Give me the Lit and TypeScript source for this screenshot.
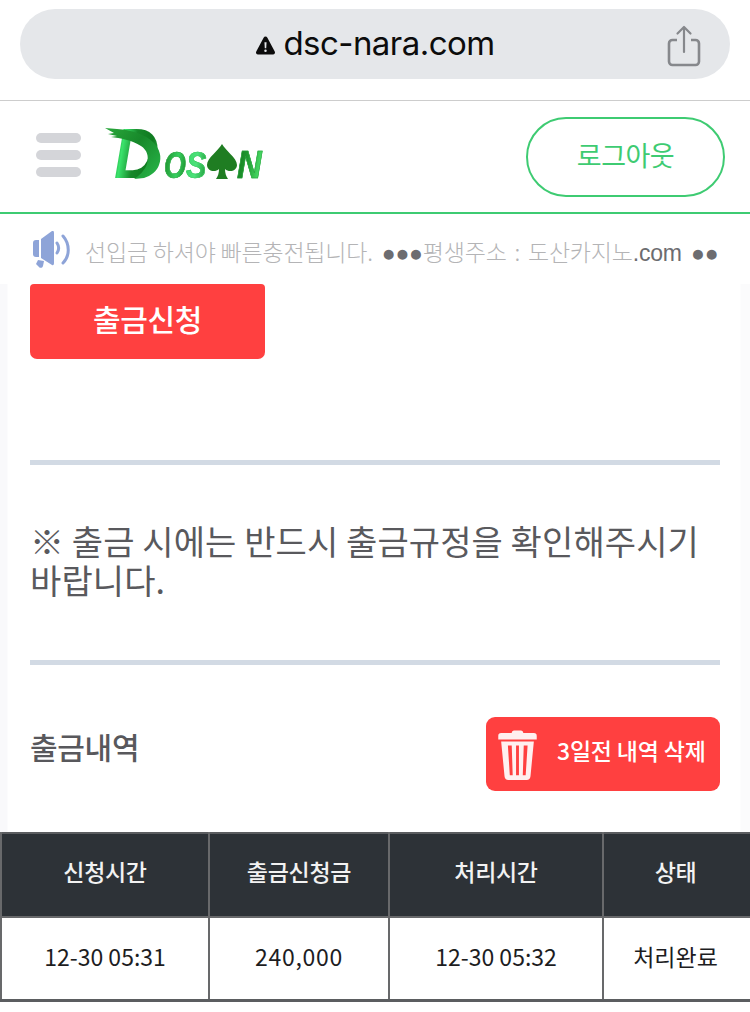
import { LitElement, html, css } from 'lit';
import { customElement } from 'lit/decorators.js';

@customElement('app-root')
export class AppRoot extends LitElement {
  static styles = css`
    :host {
      display: block;
      width: 750px;
      height: 1012px;
      overflow: hidden;
      background: #fff;
      font-family: "Noto Sans CJK KR", sans-serif;
    }

    /* safari address bar */
    .browser {
      height: 101px;
      box-sizing: border-box;
      padding: 9px 20px 0;
      border-bottom: 1px solid #cdcdcd;
    }
    .url {
      height: 70px;
      border-radius: 35px;
      background: #e5e7ea;
      display: flex;
      align-items: center;
      justify-content: center;
      position: relative;
      gap: 7px;
      font-family: Inter, "Liberation Sans", sans-serif;
      font-size: 33px;
      letter-spacing: -0.55px;
      color: #0c0c0c;
      padding-bottom: 3px;
      box-sizing: border-box;
    }
    .warn { width: 21px; height: 21px; margin-top: 5px; }
    .share { position: absolute; right: 29px; top: 16px; width: 34px; height: 42px; }

    /* site header */
    .header {
      height: 113px;
      box-sizing: border-box;
      border-bottom: 2px solid #3ecb72;
      display: flex;
      align-items: center;
      padding: 0 25px 0 36px;
    }
    .burger { display: flex; flex-direction: column; gap: 7px; width: 45px; margin-top: -3px; }
    .burger span { height: 10px; border-radius: 5px; background: #d4d5d9; }
    .logo {
      position: relative;
      margin-left: 23px;
      margin-top: -7px;
      width: 160px;
      height: 51px;
      display: flex;
      align-items: flex-end;
      font-family: "Liberation Sans", sans-serif;
      font-weight: 700;
      font-style: italic;
    }
    .logo .stroke { position: absolute; left: 0; top: 0; width: 60px; height: 51px; }
    .logo .l {
      display: block;
      flex: none;
      color: transparent;
      -webkit-background-clip: text;
      background-clip: text;
      line-height: 0.693;
      padding-top: 5px;
      transform-origin: left bottom;
    }
    .logo .d {
      font-size: 70px;
      width: 56px;
      margin: 0 -6px 0 10px;
      transform: scaleX(0.9);
      background-image: linear-gradient(100deg, #149a2c 8%, #3be36c 20%, #17882a 42%, #0f7a20 70%, #2fb84c 90%);
    }
    .logo .o {
      font-size: 36px;
      width: 28px;
      margin-right: -6px;
      transform: scaleX(0.78);
      -webkit-text-stroke: 0.6px #2aa840;
      background-image: linear-gradient(100deg, #1c8a28, #36d060 60%, #1c8a28);
    }
    .logo .s {
      font-size: 36px;
      width: 24px;
      margin-right: -4px;
      transform: scaleX(0.85);
      -webkit-text-stroke: 0.6px #35c85c;
      background-image: linear-gradient(100deg, #3bd768, #4ce27a 50%, #1f9636);
    }
    .logo .n {
      font-size: 38px;
      width: 30px;
      transform: scaleX(0.9);
      margin-left: -1px;
      -webkit-text-stroke: 0.6px #24a03a;
      background-image: linear-gradient(100deg, #157a20, #1f9a30 40%, #4ce06a 85%);
    }
    .logo .spade { width: 32px; height: 35px; flex: none; }
    .logout {
      margin-left: auto;
      width: 199px;
      height: 80px;
      box-sizing: border-box;
      border: 2px solid #3ecb72;
      border-radius: 40px;
      background: #fff;
      color: #3ecb72;
      font-family: "Noto Sans CJK KR", sans-serif;
      font-size: 27px;
      letter-spacing: -0.5px;
      padding: 0 0 4px;
    }

    /* notice marquee */
    .notice {
      height: 70px;
      box-sizing: border-box;
      display: flex;
      align-items: center;
      padding: 0 0 0 33px;
      gap: 13px;
      white-space: nowrap;
      overflow: hidden;
      font-size: 23px;
      color: #b4b4b6;
      letter-spacing: -0.2px;
      font-weight: 300;
    }
    .notice svg { width: 39px; height: 37px; flex: none; }
    .notice .text { padding-top: 3px; }
    .notice em { font-style: normal; color: #6c6c70; font-family: "Liberation Sans", sans-serif; font-weight: 400; }
    .notice .tail { margin-left: 1px; word-spacing: 3px; }

    /* main content */
    .main {
      padding: 0 30px 41px;
      background: linear-gradient(90deg, #f9f9fb 0 7px, #fff 8px 740px, #fbfbfc 741px);
    }
    .apply {
      display: block;
      width: 235px;
      height: 75px;
      border: 0;
      border-radius: 4px 4px 7px 7px;
      background: #ff4040;
      color: #fff;
      font-family: "Noto Sans CJK KR", sans-serif;
      font-weight: 500;
      font-size: 30px;
      letter-spacing: -0.4px;
      padding: 0 0 8px;
    }
    .rule { height: 5px; background: #d2dae4; }
    .rule.first { margin-top: 101px; }
    .warning {
      margin: 56px 0 61px;
      font-size: 34px;
      line-height: 39px;
      letter-spacing: 0.1px;
      word-break: keep-all;
      color: #59595d;
    }
    .history {
      margin-top: 52px;
      display: flex;
      align-items: center;
      justify-content: space-between;
    }
    .history h3 {
      margin: 0 0 16px;
      font-size: 30px;
      font-weight: 500;
      letter-spacing: -0.3px;
      color: #58585c;
    }
    .trash {
      width: 234px;
      height: 74px;
      border: 0;
      border-radius: 9px;
      background: #ff4040;
      color: #fff;
      display: flex;
      align-items: center;
      padding: 0 0 8px 11px;
      box-sizing: border-box;
      font-family: "Noto Sans CJK KR", sans-serif;
      font-weight: 500;
      font-size: 23px;
      letter-spacing: -0.2px;
    }
    .trash svg { width: 41px; height: 50px; margin: 9px 19px 0 0; flex: none; }

    table {
      width: 750px;
      height: 170px;
      border-collapse: collapse;
      table-layout: fixed;
      border-top: 2px solid #5b5d60;
      border-bottom: 3px solid #5b5d60;
    }
    th, td {
      border-left: 2px solid #68696b;
      border-right: 2px solid #68696b;
      text-align: center;
      box-sizing: border-box;
    }
    th {
      height: 84px;
      padding: 0 0 9px;
      background: #2d3237;
      color: #f2f2f2;
      font-size: 23px;
      font-weight: 500;
      letter-spacing: -0.3px;
      border-bottom: 2px solid #68696b;
    }
    td {
      height: 83px;
      padding: 0 0 5px;
      background: #fff;
      color: #1d1d1f;
      font-size: 23px;
      font-weight: 400;
      letter-spacing: 0;
    }
    td.amount { letter-spacing: 0.7px; }
    th.last, td.last { padding-right: 3px; }
  `;

  render() {
    return html`
      <div class="browser">
        <div class="url">
          <svg class="warn" viewBox="0 0 20 20">
            <path fill="#0c0c0c" fill-rule="evenodd" d="M10 1.500c.8 0 1.400.4 1.800 1.100l7 13c.7 1.400-.1 2.900-1.700 2.900H2.900c-1.600 0-2.400-1.500-1.700-2.900l7-13c.4-.7 1-1.100 1.800-1.100zM9 7l.3 5.500h1.400L11 7zm1 6.700a1.200 1.200 0 1 0 0 2.400 1.200 1.200 0 0 0 0-2.400z"/>
          </svg>
          <span>dsc-nara.com</span>
          <svg class="share" viewBox="0 0 34 42" fill="none" stroke="#86888c">
            <path stroke-width="2.600" stroke-linejoin="round" d="M10 15H5.500A3.500 3.500 0 0 0 2 18.500v18A3.500 3.500 0 0 0 5.500 40h23a3.500 3.500 0 0 0 3.500-3.500v-18a3.500 3.500 0 0 0-3.500-3.500H24"/>
            <path stroke-width="2.200" stroke-linecap="round" stroke-linejoin="round" d="M17 27V2.500M10.500 8.500 17 2l6.500 6.500"/>
          </svg>
        </div>
      </div>

      <div class="header">
        <div class="burger"><span></span><span></span><span></span></div>
        <div class="logo">
          <span class="l d">D</span><span class="l o">O</span><span class="l s">S</span>
          <svg class="spade" viewBox="0 0 32 35">
            <path fill="#1f7d22" d="M16 0c3 6 15 14 15 21 0 6-8 8-12 4 0 4 1 7 3 10H10c2-3 3-6 3-10-4 4-12 2-12-4 0-7 12-15 15-21z"/>
          </svg>
          <span class="l n">N</span>
          <!-- brush sweep over the D -->
          <svg class="stroke" viewBox="0 0 60 51">
            <defs>
              <linearGradient id="brush" x1="0" y1="0" x2="1" y2="0.800">
                <stop offset="0" stop-color="#2aa83c" />
                <stop offset="0.500" stop-color="#17882a" />
                <stop offset="1" stop-color="#26b045" />
              </linearGradient>
            </defs>
            <path fill="url(#brush)" d="M1 0l12 1c14 1 28 5 36 13 7 7 9 15 6 23-2 6-8 11-15 13l-10 1c5-3 11-9 13-15 2-8 0-14-6-18C28 12 16 10 7 9l6-1-9-2 6-1z"/>
          </svg>
        </div>
        <button class="logout">로그아웃</button>
      </div>

      <div class="notice">
        <svg viewBox="0 0 39 37" fill="none">
          <path fill="#8ea4d8" d="M0 12c0-2 1-3 3-3h3v17H3c-2 0-3-1-3-3zM8 8l11-8c1-.5 2 0 2 2v30c0 2-1 2.500-2 2L8 27zM5 29l6 1-1 5c-.5 2-3 2.500-4 1l-3-3z"/>
          <path stroke="#8ea4d8" stroke-width="3" stroke-linecap="round" d="M24 12c2 3 2 7 0 10M30 5c7 8 7 20 0 27"/>
        </svg>
        <span class="text">선입금 하셔야 빠른충전됩니다.<span class="tail"> <em>●●●</em>평생주소 : 도산카지노<em>.com ●●</em></span></span>
      </div>

      <div class="main">
        <button class="apply">출금신청</button>
        <div class="rule first"></div>
        <div class="warning">※ 출금 시에는 반드시 출금규정을 확인해주시기 바랍니다.</div>
        <div class="rule"></div>
        <div class="history">
          <h3>출금내역</h3>
          <button class="trash">
            <svg viewBox="0 0 40 52">
              <path fill="#fff" fill-opacity=".92" d="M14 3c0-1.500 1-2.500 2.500-2.500h7C25 .5 26 1.500 26 3h11c2 0 3 1 3 3v4H0V6c0-2 1-3 3-3z"/>
              <path fill="#fff" fill-opacity=".92" fill-rule="evenodd" d="M3 12h34l-3.500 36c-.2 2.500-1.500 4-4 4h-19c-2.500 0-3.800-1.500-4-4zm7 4 2 31h3l-1-31zm8.500 0v31h3V16zm8 0-1 31h3l2-31z"/>
            </svg>
            3일전 내역 삭제
          </button>
        </div>
      </div>

      <table>
        <colgroup>
          <col style="width:208px" /><col style="width:180px" /><col style="width:214px" /><col style="width:148px" />
        </colgroup>
        <tr><th>신청시간</th><th>출금신청금</th><th>처리시간</th><th class="last">상태</th></tr>
        <tr><td>12-30 05:31</td><td class="amount">240,000</td><td>12-30 05:32</td><td class="last">처리완료</td></tr>
      </table>
    `;
  }
}
